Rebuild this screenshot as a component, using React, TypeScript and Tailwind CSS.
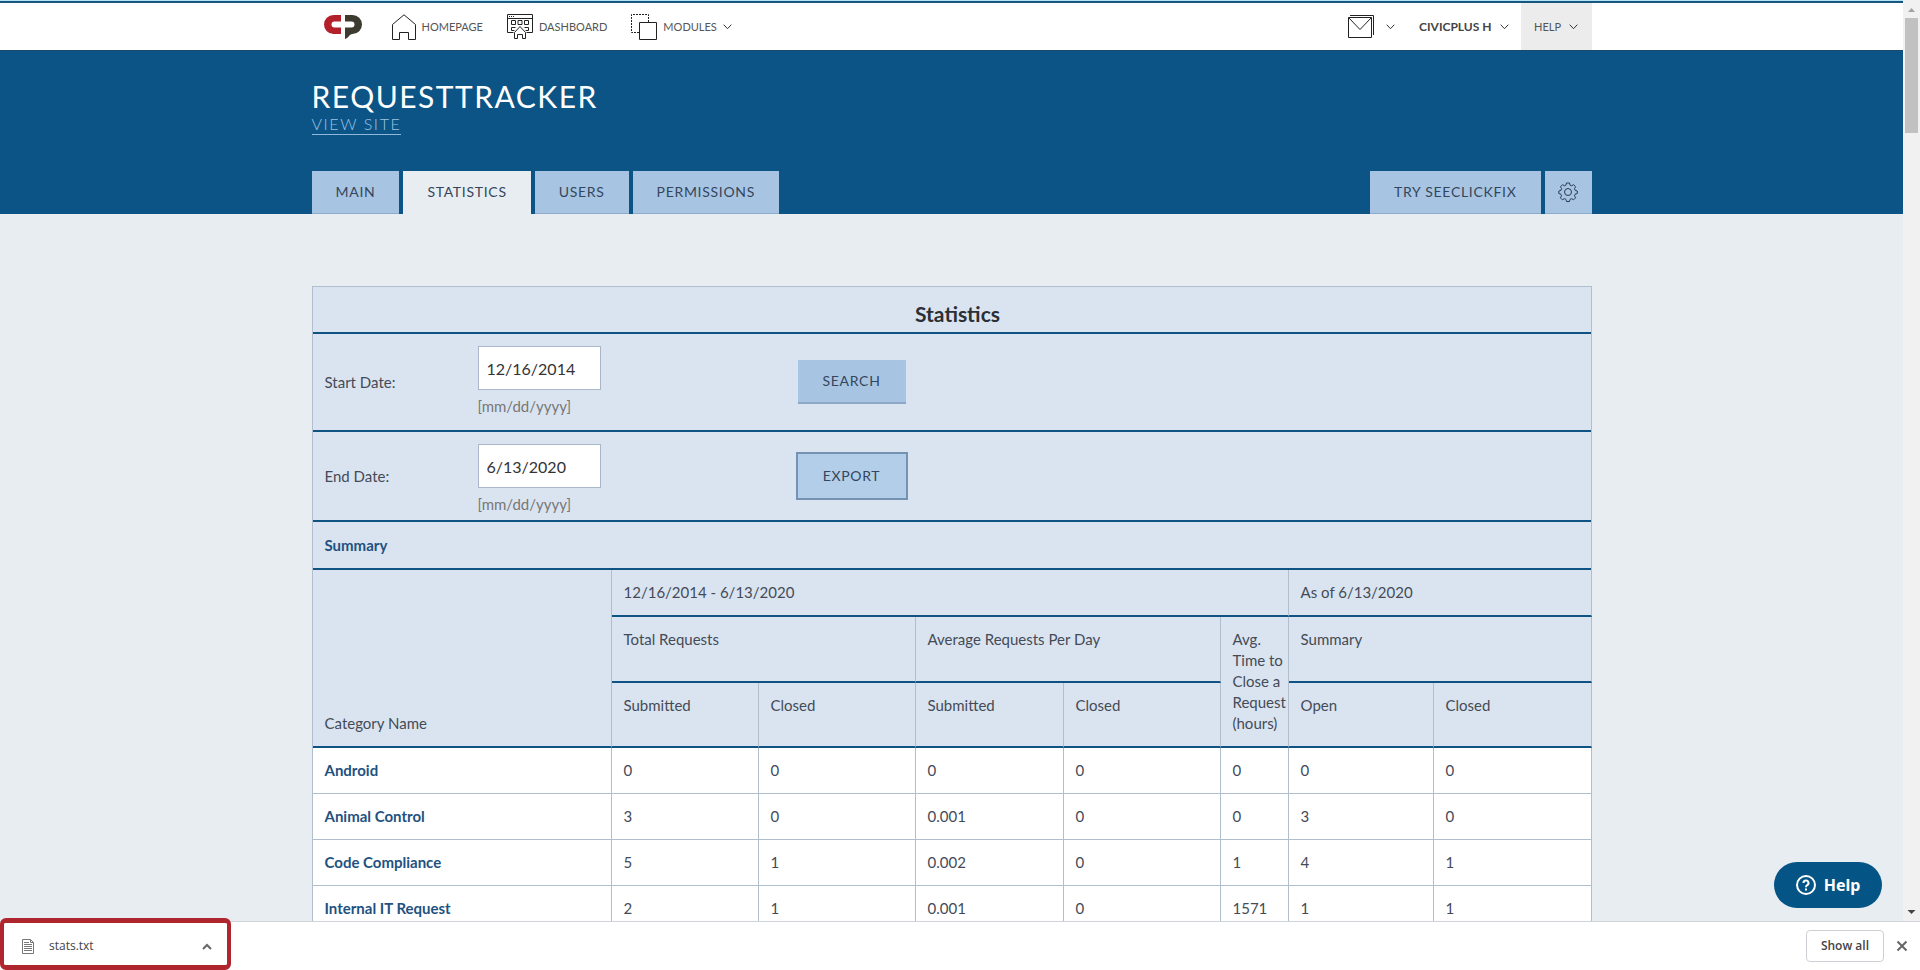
import type { ReactNode } from "react";

const navText = "text-[11px] text-[#555]";

const tabs = [
  { name: "Main", href: "#main", active: false },
  { name: "Statistics", href: "#statistics", active: true },
  { name: "Users", href: "#users", active: false },
  { name: "Permissions", href: "#permissions", active: false },
];

const rows = [
  { name: "Android", values: ["0", "0", "0", "0", "0", "0", "0"] },
  { name: "Animal Control", values: ["3", "0", "0.001", "0", "0", "3", "0"] },
  { name: "Code Compliance", values: ["5", "1", "0.002", "0", "1", "4", "1"] },
  {
    name: "Internal IT Request",
    values: ["2", "1", "0.001", "0", "1571", "1", "1"],
  },
];

const Chevron = () => (
  <svg width="9" height="6" viewBox="0 0 9 6" fill="none" stroke="#333">
    <path d="M.7.7 4.5 4.7 8.3.7" />
  </svg>
);

const Logo = () => (
  <svg width="38" height="24" viewBox="0 0 38 24">
    <path
      d="M17 0v6.500H10.500a3 3 0 0 0 0 6H17V19H9.500a9.500 9.500 0 0 1 0-19z"
      fill="#b3202c"
    />
    <path
      d="M21 0h7.500a9.500 9.500 0 0 1 0 19C25 19 25 23 21 24V12.500h6.500a3 3 0 0 0 0-6H21z"
      fill="#3d3b30"
    />
    <path d="M10 8h18v3H10z" fill="#fff" />
  </svg>
);

const HomeIcon = () => (
  <svg width="24" height="26" viewBox="0 0 24 26" fill="none" stroke="#222">
    <path d="M.5 10.500 12 .8l11.500 9.700v15h-7v-7h-9v7h-7z" />
  </svg>
);

const DashboardIcon = () => (
  <svg width="26" height="26" viewBox="0 0 26 26" fill="none" stroke="#222">
    <path d="M6.500 18.500h-6V.5h25v18h-6M.5 4.500h25" />
    <path d="M2 2.500h1m1 0h1m1 0h1" />
    <path d="M4.500 6.500h4v4h-4zM11 6.500h4v4h-4zM17.500 6.500h4v4h-4zM8.500 13.500h-4v3h3M17.500 13.500h4v3h-3" />
    <path d="M7.500 18.500 13 12.500l5.500 6v6h-3v-4h-5v4h-3z" />
  </svg>
);

const ModulesIcon = () => (
  <svg width="26" height="26" viewBox="0 0 26 26" fill="none" stroke="#222">
    <path d="M8 18.500H.5V.5h17V8" strokeDasharray="2 1" />
    <path d="M8.500 8.500h17v17h-17z" />
  </svg>
);

const MailIcon = () => (
  <svg width="26" height="24" viewBox="0 0 26 24" fill="none" stroke="#222">
    <path d="M.5 2.500h23v20H.5z" />
    <path d="m.5 2.500 11.500 12 11.500-12M2 .5h23.500V20" />
  </svg>
);

const GearIcon = () => (
  <svg width="20" height="20" viewBox="0 0 20 20" fill="none" stroke="#2b3a52">
    <circle cx="10" cy="10" r="3.500" />
    <path d="M8.500 1h3l.6 2.200 1.500.6 2-1.100 2 2-1.100 2 .6 1.600 2.200.7v2.500l-2.200.7-.6 1.600 1.100 2-2 2-2-1.100-1.500.6-.6 2.200h-3l-.6-2.200-1.500-.6-2 1.100-2-2 1.100-2-.6-1.600L.8 11.500V9L3 8.300l.6-1.600-1.100-2 2-2 2 1.100 1.400-.6z" strokeLinejoin="round" />
  </svg>
);

const FileIcon = () => (
  <svg width="12" height="15" viewBox="0 0 12 15" fill="none" stroke="#777">
    <path d="M.5.5h8l3 3v11H.5z" />
    <path d="M8.500.5v3h3M2 3.500h5M2 5.500h8M2 7.500h8M2 9.500h8M2 11.500h8" />
  </svg>
);

const DateRow = ({
  id,
  label,
  value,
  className,
  button,
}: {
  id: string;
  label: string;
  value: string;
  className: string;
  button: ReactNode;
}) => (
  <div
    className={`flex items-center border-b-2 border-[#0f5384] px-3 ${className}`}
  >
    <label htmlFor={id} className="w-[153px]">
      {label}
    </label>
    <div className="mt-3 w-80 self-start">
      <input
        id={id}
        type="text"
        defaultValue={value}
        className="block h-11 w-[123px] border border-[#a9b7c8] bg-white px-2 text-base text-[#333] outline-none"
      />
      <p className="mt-1.5 text-[#777]">[mm/dd/yyyy]</p>
    </div>
    {button}
  </div>
);

const headCell =
  "border-r border-b-2 border-r-[#b0bece] border-b-[#0f5384] py-3 pl-3 text-left align-top font-normal";

const StatsTable = () => (
  <table className="w-full table-fixed border-separate border-spacing-0">
    <colgroup>
      <col className="w-[299px]" />
      <col className="w-[147px]" />
      <col className="w-[157px]" />
      <col className="w-[148px]" />
      <col className="w-[157px]" />
      <col className="w-[68px]" />
      <col className="w-[145px]" />
      <col className="w-[158px]" />
    </colgroup>
    <thead className="bg-[#dae4f0]">
      <tr>
        <th
          rowSpan={3}
          className="border-r border-b-2 border-r-[#b0bece] border-b-[#0f5384] p-3 text-left align-bottom font-normal"
        >
          Category Name
        </th>
        <th colSpan={5} className={headCell}>
          12/16/2014 - 6/13/2020
        </th>
        <th colSpan={2} className={headCell}>
          As of 6/13/2020
        </th>
      </tr>
      <tr>
        <th colSpan={2} className={headCell}>
          Total Requests
        </th>
        <th colSpan={2} className={headCell}>
          Average Requests Per Day
        </th>
        <th rowSpan={2} className={headCell}>
          Avg. Time to Close a Request (hours)
        </th>
        <th colSpan={2} className={headCell}>
          Summary
        </th>
      </tr>
      <tr>
        <th className={headCell}>Submitted</th>
        <th className={headCell}>Closed</th>
        <th className={headCell}>Submitted</th>
        <th className={headCell}>Closed</th>
        <th className={headCell}>Open</th>
        <th className={headCell}>Closed</th>
      </tr>
    </thead>
    <tbody className="bg-white">
      {rows.map(({ name, values }) => (
        <tr key={name}>
          <th className="border-r border-b border-[#b0bece] p-3 text-left font-bold">
            <a href="#category" className="text-[#1f5280]">
              {name}
            </a>
          </th>
          {values.map((value, i) => (
            <td key={i} className="border-r border-b border-[#b0bece] p-3">
              {value}
            </td>
          ))}
        </tr>
      ))}
    </tbody>
  </table>
);

const TopNav = () => (
  <nav className="border-t border-[#b5e3f3] bg-white">
    <div className="border-t-2 border-[#15577f]">
      <div className="mx-auto flex h-[47px] max-w-[1280px] items-center pl-3">
        <a href="#civicplus" aria-label="CivicPlus" className="mr-[30px]">
          <Logo />
        </a>
        <a href="#home" className={`mr-6 flex items-center gap-1.5 ${navText}`}>
          <HomeIcon />
          HOMEPAGE
        </a>
        <a href="#dashboard" className={`mr-6 flex items-center gap-1.5 ${navText}`}>
          <DashboardIcon />
          DASHBOARD
        </a>
        <button className={`flex items-center gap-1.5 ${navText}`}>
          <ModulesIcon />
          MODULES
          <Chevron />
        </button>
        <div className="ml-auto flex h-full items-center">
          <button aria-label="Messages" className="mr-6 flex items-center gap-3">
            <MailIcon />
            <Chevron />
          </button>
          <button className="mr-3 flex items-center gap-2 text-xs font-bold text-[#444]">
            CIVICPLUS H
            <Chevron />
          </button>
          <button
            className={`flex h-full w-[71px] items-center justify-center gap-2 bg-[#ececec] ${navText}`}
          >
            HELP
            <Chevron />
          </button>
        </div>
      </div>
    </div>
  </nav>
);

const Banner = () => (
  <header className="border-t border-[#1b4a6b] bg-[#0b5485]">
    <div className="mx-auto max-w-[1280px] pt-[27px]">
      <h1 className="text-[30px] leading-9 tracking-wider text-white">
        REQUESTTRACKER
      </h1>
      <a
        href="#site"
        className="inline-block border-b border-[#8fb9da] text-base leading-5 font-light tracking-widest text-[#9cc3e3]"
      >
        VIEW SITE
      </a>
      <div className="mt-9 flex gap-1 text-sm tracking-wider text-[#35455c] uppercase">
        {tabs.map(({ name, href, active }) => (
          <a
            key={name}
            href={href}
            className={`flex h-[43px] items-center border-b px-6 ${
              active
                ? "border-[#e8edf1] bg-[#e8edf1]"
                : "border-[#8fadcb] bg-[#a7c5e3]"
            }`}
          >
            {name}
          </a>
        ))}
        <a
          href="#seeclickfix"
          className="ml-auto flex h-[43px] items-center border-b border-[#8fadcb] bg-[#a7c5e3] px-6"
        >
          Try SeeClickFix
        </a>
        <button
          aria-label="Settings"
          className="flex h-[43px] w-[47px] items-center justify-center border-b border-[#8fadcb] bg-[#a7c5e3]"
        >
          <GearIcon />
        </button>
      </div>
    </div>
  </header>
);

const ScrollBar = () => (
  <div className="flex w-[17px] flex-col items-center bg-[#f1f1f1]">
    <svg width="17" height="18" viewBox="0 0 17 18" fill="#a3a3a3">
      <path d="m8.500 8 3.500 4H5z" />
    </svg>
    <div className="h-[115px] w-[13px] bg-[#c1c1c1]" />
    <svg width="17" height="18" viewBox="0 0 17 18" fill="#444" className="mt-auto">
      <path d="m8.500 11 4-4h-8z" />
    </svg>
  </div>
);

const DownloadBar = () => (
  <footer className="relative flex h-[49px] items-center border-t border-[#d0d4d8] bg-white pr-3 font-['Open_Sans',sans-serif] text-xs text-[#444]">
    <button className="flex w-[220px] items-center pl-[22px]">
      <FileIcon />
      <span className="ml-[15px]">stats.txt</span>
      <svg
        width="10"
        height="7"
        viewBox="0 0 10 7"
        fill="none"
        stroke="#666"
        strokeWidth="2"
        className="ml-auto mr-2"
      >
        <path d="m1 6 4-4 4 4" />
      </svg>
    </button>
    <div className="pointer-events-none absolute -top-1 bottom-0 left-0 w-[231px] rounded-md border-x-[4px] border-y-[5px] border-[#b0262f]" />
    <button className="ml-auto h-8 rounded border border-[#ccd0d4] px-[14px] font-semibold">
      Show all
    </button>
    <button aria-label="Close" className="ml-3">
      <svg width="12" height="12" viewBox="0 0 12 12" stroke="#666" strokeWidth="2">
        <path d="m1.500 1.500 9 9m0-9-9 9" />
      </svg>
    </button>
  </footer>
);

const App = () => (
  <div className="flex h-screen flex-col bg-[#e8edf1] font-['Lato',sans-serif] text-[15px] leading-[21px] text-[#444b57]">
    <div className="relative flex min-h-0 flex-1">
      <div className="min-w-0 flex-1 overflow-hidden">
        <TopNav />
        <Banner />
        <main className="mx-auto mt-[72px] max-w-[1280px] border-t border-l border-[#b0bece] bg-[#dae4f0]">
          <div className="border-r border-[#b0bece]">
            <h2 className="h-[47px] border-b-2 border-[#0f5384] pt-[15px] pl-3 text-center text-[21px] leading-6 font-bold text-[#2b2f36]">
              Statistics
            </h2>
            <DateRow
              id="start"
              label="Start Date:"
              value="12/16/2014"
              className="h-[98px]"
              button={
                <button className="h-11 w-[108px] border-b-2 border-[#8ca8c6] bg-[#a7c5e2] text-sm tracking-wider text-[#35455c]">
                  SEARCH
                </button>
              }
            />
            <DateRow
              id="end"
              label="End Date:"
              value="6/13/2020"
              className="h-[90px]"
              button={
                <button className="h-11 w-[108px] bg-[#b2cee8] text-sm tracking-wider text-[#35455c] outline-2 outline-[#7492b1]">
                  EXPORT
                </button>
              }
            />
            <h3 className="flex h-12 items-center border-b-2 border-[#0f5384] px-3 font-bold text-[#1f5280]">
              Summary
            </h3>
          </div>
          <StatsTable />
        </main>
      </div>
      <ScrollBar />
      <button className="absolute right-[38px] bottom-[13px] flex h-[46px] w-[108px] items-center justify-center gap-2 rounded-full bg-[#045485] font-['Noto_Sans',sans-serif] text-base font-bold text-white">
        <svg width="20" height="20" viewBox="0 0 20 20" fill="none" stroke="currentColor" strokeWidth="2">
          <circle cx="10" cy="10" r="9" />
          <path d="M7.500 8a2.500 2.500 0 1 1 3.700 2.200Q10 10.900 10 12.200M10 13.600v1.900" />
        </svg>
        Help
      </button>
    </div>
    <DownloadBar />
  </div>
);

export default App;
